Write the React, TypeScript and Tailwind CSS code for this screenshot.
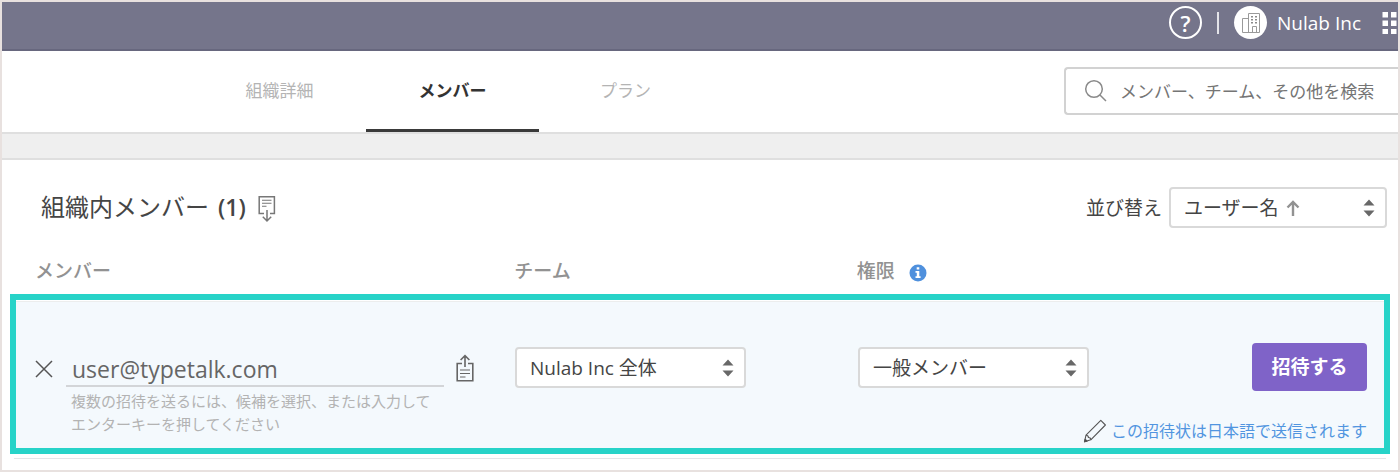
import { useState, type ReactNode } from 'react';

const TABS = ['組織詳細', 'メンバー', 'プラン'];

function BuildingIcon() {
  return (
    <svg viewBox="0 0 20 22" className="w-5 h-[22px]" fill="none" stroke="#9a9a9a" strokeWidth="1">
      <path d="M7.5 20.5V1.5h11v19M7.5 6.5h-6v14h17M11.5 20.5v-6h4v6" />
      <path d="M10 4.8h2M14 4.8h2M10 7.8h2M14 7.8h2M10 10.8h2M14 10.8h2" stroke="#8a8a8a" strokeWidth="1.6" />
    </svg>
  );
}

function AppsIcon() {
  return (
    <svg viewBox="0 0 16 22" className="w-4 h-[22px]" fill="#fff">
      {[0, 8.5, 17].map((y) => (
        <g key={y}>
          <rect x="0.5" y={y} width="5.5" height="5.5" />
          <rect x="9" y={y} width="5.5" height="5.5" />
        </g>
      ))}
    </svg>
  );
}

function ExportIcon() {
  return (
    <svg viewBox="0 0 18 28" className="w-[18px] h-7" fill="none" stroke="#777" strokeWidth="1.5">
      <path d="M6 18.5H1.2V1.7h15.2v16.8H12" />
      <path d="M4 5.2h9.5M4 8.2h9.5M4 11.2h4.5" strokeWidth="1.1" />
      <path d="M9 15v11M4.8 21.8L9 26l4.2-4.2" />
    </svg>
  );
}

function ImportIcon() {
  return (
    <svg viewBox="0 0 18 28" className="w-[18px] h-7" fill="none" stroke="#666" strokeWidth="1.6">
      <path d="M6 9.5H1.2v17.2h15.6V9.5H12" />
      <path d="M4 16h10M4 19.5h10M4 23h5.5" strokeWidth="1.2" />
      <path d="M9 13V1.8M4.6 6L9 1.6 13.4 6" />
    </svg>
  );
}

function PencilIcon() {
  return (
    <svg viewBox="0 0 24 24" className="w-6 h-6" fill="none" stroke="#555" strokeWidth="1.1" strokeLinejoin="round">
      <path d="M1.5 22.8L3 16.2 17.8 1.4l4.6 4.6L7.8 20.8z" />
      <path d="M3 16.2c1.8 0 2.4.8 2.4 2.3 1.4-.1 2.4.7 2.4 2.3" />
      <path d="M1.5 22.8l.6-2.6 2 2z" fill="#444" />
    </svg>
  );
}

interface SelectBoxProps {
  id: string;
  className: string;
  options: string[];
  children?: ReactNode;
}

function SelectBox({ id, className, options, children }: SelectBoxProps) {
  return (
    <div className={`relative ${className}`}>
      <select
        id={id}
        className="w-full h-[41px] pl-[13px] pr-8 appearance-none bg-white border-2 border-[#d9d9d9] rounded text-[19px] leading-6 text-[#454545]"
      >
        {options.map((o) => (
          <option key={o}>{o}</option>
        ))}
      </select>
      {children}
      <svg viewBox="0 0 12 18" className="absolute right-3 top-3 w-3 h-[18px] pointer-events-none" fill="#686868">
        <path d="M.5 6.5L6 .5l5.500 6zM.5 11.500L6 17.500l5.500-6z" />
      </svg>
    </div>
  );
}

export default function App() {
  const [activeTab, setActiveTab] = useState('メンバー');
  const [email, setEmail] = useState('user@typetalk.com');

  return (
    <div className="border-2 border-[#e8e1df] bg-white text-[#454545] font-['Open_Sans','Noto_Sans_CJK_JP',sans-serif]">
      {/* Global bar */}
      <header className="flex items-center justify-end h-[49px] pb-1.5 bg-[#75758b] border-b-2 border-[#67677e] text-white">
        <button aria-label="ヘルプ" className="w-[33px] h-[33px] rounded-full border-2 border-white text-[22px] leading-6 font-semibold flex items-center justify-center">
          ?
        </button>
        <span className="w-0.5 h-[22px] ml-[15px] mr-[15px] bg-white/80" />
        <button className="flex items-center gap-[10px] text-[19px] leading-6">
          <span className="w-[33px] h-[33px] rounded-full bg-white flex items-center justify-center">
            <BuildingIcon />
          </span>
          Nulab Inc
        </button>
        <button aria-label="アプリ" className="ml-[21px]">
          <AppsIcon />
        </button>
      </header>

      {/* Tabs and search */}
      <div className="flex justify-between h-[83px] border-b-2 border-[#dfdfdf]">
        <nav className="flex ml-[191px]">
          {TABS.map((tab) => (
            <button
              key={tab}
              onClick={() => setActiveTab(tab)}
              className={`w-[173px] pt-0.5 text-[17px] leading-6 border-b-3 ${
                tab === activeTab ? 'font-bold text-[#333] border-[#3a3a3a]' : 'text-[#b4b4b4] border-transparent'
              }`}
            >
              {tab}
            </button>
          ))}
        </nav>
        <label className="flex items-center w-[334px] h-12 mt-4 pl-[18px] border-2 border-r-0 border-[#d2d2d2] rounded-l">
          <svg viewBox="0 0 24 24" className="w-6 h-6 mr-3 shrink-0" fill="none" stroke="#8a8a8a" strokeWidth="1.5">
            <circle cx="10" cy="10" r="8.300" />
            <path d="M16 16l6 6" />
          </svg>
          <input
            type="search"
            aria-label="検索"
            placeholder="メンバー、チーム、その他を検索"
            className="flex-1 min-w-0 pt-0.5 text-[17px] leading-6 outline-none placeholder:text-[#757575]"
          />
        </label>
      </div>
      <div className="h-[26px] bg-[#efefef] border-b-2 border-[#dfdfdf]" />

      <main className="pt-[27px] pb-[11px]">
        <div className="flex items-center justify-between pl-[39px] pr-[11px]">
          <div className="flex items-center pb-0.5">
            <h1 className="flex items-center gap-[9px] text-[24px] leading-8">
              組織内メンバー <span className="text-[23px] font-semibold">(1)</span>
            </h1>
            <button aria-label="エクスポート" className="mt-1 ml-3">
              <ExportIcon />
            </button>
          </div>
          <div className="flex items-center gap-[7px]">
            <label htmlFor="sort" className="text-[19px] leading-6">
              並び替え
            </label>
            <SelectBox id="sort" className="w-[218px]" options={['ユーザー名', '登録日']}>
              <svg viewBox="0 0 14 16" className="absolute left-[117px] top-[13px] w-3.5 h-4 pointer-events-none" fill="none" stroke="#929292" strokeWidth="2.400">
                <path d="M7 16V2M1.500 7.500L7 2l5.500 5.500" />
              </svg>
            </SelectBox>
          </div>
        </div>

        <div className="grid grid-cols-[480fr_343fr_509fr] px-[33px] mt-[31px] text-[19px] leading-6 font-medium text-[#929292]">
          <label htmlFor="email">メンバー</label>
          <label htmlFor="team">チーム</label>
          <div className="flex items-center gap-[14px]">
            <label htmlFor="role">権限</label>
            <button aria-label="権限について" className="mt-1">
              <svg viewBox="0 0 18 18" className="w-[18px] h-[18px]">
                <circle cx="9" cy="9" r="8.500" fill="#4f90dd" />
                <path d="M7.700 3.300h2.600v2.200H7.700zM6.500 7h3.800v5.300h1.300v1.700H6.500v-1.700h1.300V8.700H6.500z" fill="#fff" />
              </svg>
            </button>
          </div>
        </div>

        {/* Invite row */}
        <div className="mx-2 mt-[11px] pt-px border-6 border-[#27d3c8]">
          <form
            onSubmit={(e) => e.preventDefault()}
            className="grid grid-cols-[480fr_343fr_509fr] pl-[19px] pr-[17px] pt-[41px] pb-[5px] border-t border-[#eceded] bg-[#f4f9fd]"
          >
            <div className="flex items-start">
              <button type="button" aria-label="閉じる" className="mt-[17px]">
                <svg viewBox="0 0 18 18" className="w-[18px] h-[18px]" fill="none" stroke="#555" strokeWidth="1.500">
                  <path d="M1 1l16 16M17 1L1 17" />
                </svg>
              </button>
              <div className="flex-1 ml-[13px]">
                <input
                  id="email"
                  type="email"
                  value={email}
                  onChange={(e) => setEmail(e.target.value)}
                  aria-describedby="email-help"
                  className="w-full h-11 pt-2.5 pl-1.5 border-b-2 border-[#d3d5d8] bg-transparent text-[23px] leading-8 text-[#666] outline-none"
                />
                <p id="email-help" className="pl-[5px] pt-[3px] text-[15px] leading-[23px] text-[#b3b3b3]">
                  複数の招待を送るには、候補を選択、または入力して
                  <br />
                  エンターキーを押してください
                </p>
              </div>
              <button type="button" aria-label="インポート" className="mt-[11px] ml-3 mr-[41px]">
                <ImportIcon />
              </button>
            </div>
            <SelectBox id="team" className="w-[231px] mt-1" options={['Nulab Inc 全体']} />
            <div className="flex flex-col">
              <div className="flex items-start justify-between">
                <SelectBox id="role" className="w-[231px] mt-1" options={['一般メンバー', '管理者']} />
                <button type="submit" className="w-[115px] h-12 rounded bg-[#7f63c8] text-white text-[19px] leading-6 font-bold">
                  招待する
                </button>
              </div>
              <a href="#language" className="flex items-center justify-end gap-1 mt-7 text-[16px] leading-6 text-[#5195e0]">
                <PencilIcon />
                この招待状は日本語で送信されます
              </a>
            </div>
          </form>
        </div>
        <div className="mx-3 h-[5px] border-b border-[#e4e5e8]" />
      </main>
    </div>
  );
}
